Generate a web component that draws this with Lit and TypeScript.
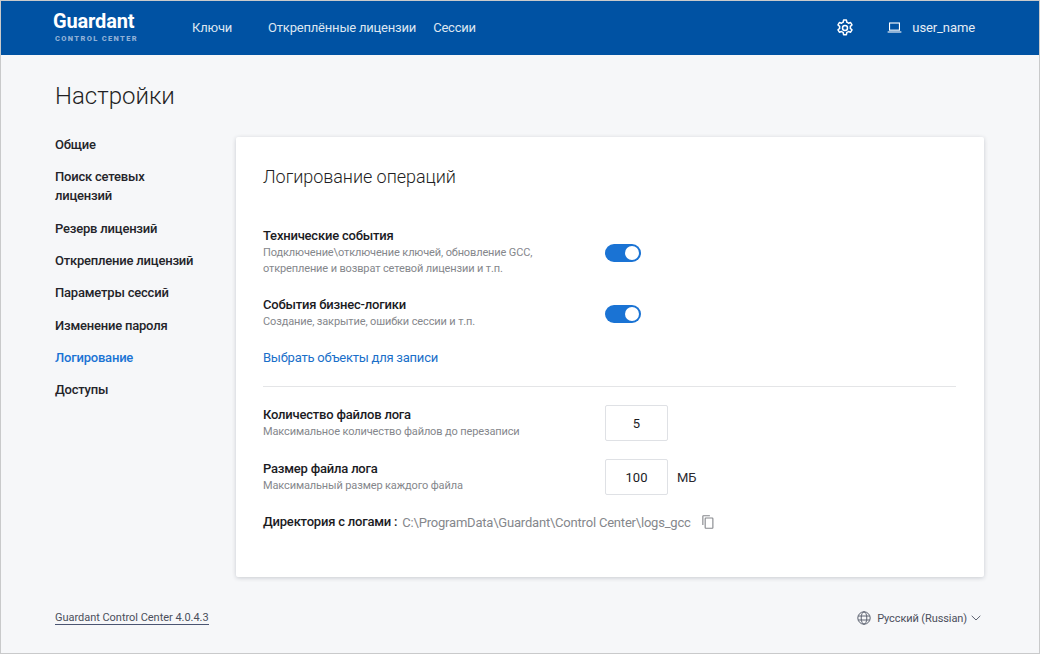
import { LitElement, css, html } from 'lit';
import { customElement } from 'lit/decorators.js';

const sections = [
  'Общие',
  'Поиск сетевых лицензий',
  'Резерв лицензий',
  'Открепление лицензий',
  'Параметры сессий',
  'Изменение пароля',
  'Логирование',
  'Доступы',
];

@customElement('app-root')
export class AppRoot extends LitElement {
  render() {
    return html`
      <div class="frame">
        <header class="topbar">
          <div class="logo">
            <span class="logo__name">Guardant</span>
            <span class="logo__sub">CONTROL CENTER</span>
          </div>
          <nav class="nav">
            <a class="nav__keys">Ключи</a>
            <a class="nav__detached">Открепл&#1105;нные лицензии</a>
            <a>Сессии</a>
          </nav>
          <svg class="gear" viewBox="0 0 24 24" fill="none" stroke="currentColor" stroke-width="1.8" stroke-linejoin="round">
            <circle cx="12" cy="12" r="3"></circle>
            <path d="M10.3 2.5h3.4l.5 2.6a7.2 7.2 0 0 1 2 1.15l2.5-.85 1.7 2.95-2 1.75a7.2 7.2 0 0 1 0 2.3l2 1.75-1.7 2.95-2.5-.85a7.2 7.2 0 0 1-2 1.15l-.5 2.6h-3.4l-.5-2.6a7.2 7.2 0 0 1-2-1.15l-2.5.85-1.7-2.95 2-1.75a7.2 7.2 0 0 1 0-2.3l-2-1.75 1.7-2.95 2.5.85a7.2 7.2 0 0 1 2-1.15z"></path>
          </svg>
          <div class="user">
            <svg class="laptop" viewBox="0 0 16 12" fill="none" stroke="currentColor" stroke-width="1.2">
              <rect x="2.6" y="1.1" width="10.8" height="7.8"></rect>
              <path d="M0.5 10.9h15"></path>
            </svg>
            <span>user_name</span>
          </div>
        </header>

        <div class="page">
          <h1 class="page__title">Настройки</h1>
          <div class="columns">
            <aside class="side">
              ${sections.map(
                (s) => html`<a class="side__item ${s === 'Логирование' ? 'side__item--active' : ''}">${s}</a>`
              )}
            </aside>

            <main class="card">
              <h2 class="card__title">Логирование операций</h2>

              <div class="row row--first">
                <div class="row__text">
                  <div class="label">Технические события</div>
                  <div class="hint">Подключение\\отключение ключей, обновление GCC,<br />открепление и возврат сетевой лицензии и т.п.</div>
                </div>
                <span class="switch"><span class="switch__knob"></span></span>
              </div>

              <div class="row row--second">
                <div class="row__text">
                  <div class="label">События бизнес-логики</div>
                  <div class="hint">Создание, закрытие, ошибки сессии и т.п.</div>
                </div>
                <span class="switch"><span class="switch__knob"></span></span>
              </div>

              <a class="link">Выбрать объекты для записи</a>
              <hr class="divider" />

              <div class="row">
                <div class="row__text">
                  <div class="label">Количество файлов лога</div>
                  <div class="hint">Максимальное количество файлов до перезаписи</div>
                </div>
                <div class="field">5</div>
              </div>

              <div class="row row--size">
                <div class="row__text">
                  <div class="label">Размер файла лога</div>
                  <div class="hint">Максимальный размер каждого файла</div>
                </div>
                <div class="field">100</div>
                <span class="unit">МБ</span>
              </div>

              <div class="dir">
                <span class="label">Директория с логами :</span>
                <span class="dir__path">C:\\ProgramData\\Guardant\\Control Center\\logs_gcc</span>
                <svg class="copy" viewBox="0 0 14 16" fill="none" stroke="currentColor" stroke-width="1.3">
                  <path d="M1 11.5V1.2a.5.5 0 0 1 .5-.5h7.7"></path>
                  <rect x="3.7" y="3.4" width="9" height="11.9" rx="0.7"></rect>
                </svg>
              </div>
            </main>
          </div>

          <footer class="footer">
            <a class="version">Guardant Control Center 4.0.4.3</a>
            <div class="lang">
              <svg class="globe" viewBox="0 0 14 14" fill="none" stroke="currentColor" stroke-width="1">
                <circle cx="7" cy="7" r="6.2"></circle>
                <ellipse cx="7" cy="7" rx="2.8" ry="6.2"></ellipse>
                <path d="M1.2 5h11.6M1.2 9h11.6"></path>
              </svg>
              <span>Русский (Russian)</span>
              <svg class="chevron" viewBox="0 0 10 6" fill="none" stroke="currentColor" stroke-width="1">
                <path d="M.7.8 5 5 9.3.8"></path>
              </svg>
            </div>
          </footer>
        </div>
      </div>
    `;
  }

  static styles = css`
    :host {
      display: block;
      font-family: Roboto, 'Liberation Sans', sans-serif;
      color: #1b1b1f;
    }

    .frame {
      box-sizing: border-box;
      width: 1040px;
      height: 654px;
      border: 1px solid #c9cacb;
      background: #f6f7f9;
      display: flex;
      flex-direction: column;
    }

    .topbar {
      flex: none;
      height: 54px;
      background: #0052a3;
      color: #fff;
      display: flex;
      align-items: center;
      padding-left: 53px;
      padding-right: 64px;
    }

    .logo {
      display: flex;
      flex-direction: column;
      width: 138px;
    }

    .logo__name {
      font-size: 20px;
      font-weight: 700;
      line-height: 21px;
      letter-spacing: -0.15px;
      margin-top: -1px;
      margin-left: -1px;
    }

    .logo__sub {
      font-size: 7.5px;
      font-weight: 900;
      line-height: 10px;
      letter-spacing: 1.35px;
      color: #8fb0d6;
      margin-left: 1px;
      margin-top: 2px;
    }

    .nav {
      display: flex;
      font-size: 13px;
      letter-spacing: -0.2px;
      color: #dde6f1;
      margin-bottom: 2px;
    }

    .nav__keys {
      margin-right: 36px;
    }

    .nav__detached {
      margin-right: 17px;
    }

    .gear {
      width: 20px;
      height: 20px;
      margin-left: auto;
      color: #fff;
    }

    .user {
      display: flex;
      align-items: center;
      margin-left: 32px;
      margin-bottom: 1px;
      font-size: 13px;
      letter-spacing: -0.1px;
      color: #e6edf5;
    }

    .laptop {
      width: 15px;
      height: 11px;
      margin-right: 10px;
      color: #fff;
    }

    .page {
      flex: 1;
      display: flex;
      flex-direction: column;
      padding: 0 55px 0 54px;
      min-height: 0;
    }

    .page__title {
      margin: 25px 0 0;
      font-size: 24px;
      font-weight: 300;
      line-height: 32px;
      color: #1f1f24;
    }

    .columns {
      display: flex;
      margin-top: 25px;
    }

    .side {
      width: 181px;
      flex: none;
      display: flex;
      flex-direction: column;
      gap: 12.8px;
      font-size: 13px;
      font-weight: 500;
      letter-spacing: -0.2px;
      line-height: 19.5px;
      margin-top: -2.4px;
    }

    .side__item {
      width: 145px;
      color: #24242a;
    }

    .side__item--active {
      color: #1a73d4;
    }

    .card {
      box-sizing: border-box;
      width: 749px;
      height: 440px;
      background: #fff;
      border-radius: 2px;
      box-shadow: 0 1px 4px rgba(40, 50, 70, 0.22);
      padding: 27px 28px 0 27px;
      display: flex;
      flex-direction: column;
    }

    .card__title {
      margin: 0;
      font-size: 18px;
      font-weight: 300;
      line-height: 26px;
      letter-spacing: -0.05px;
      color: #1f1f24;
    }

    .row {
      display: flex;
      align-items: center;
      margin-top: 18px;
      height: 36px;
    }

    .row--first {
      margin-top: 37px;
      height: 50px;
    }

    .row--second {
      margin-top: 18px;
      height: 36px;
    }

    .row--size {
      margin-top: 18px;
    }

    .row__text {
      width: 342px;
      flex: none;
    }

    .label {
      font-size: 13px;
      font-weight: 500;
      letter-spacing: -0.2px;
      line-height: 18px;
      color: #1b1b1f;
    }

    .hint {
      font-size: 11px;
      letter-spacing: -0.13px;
      line-height: 16px;
      color: #85878c;
    }

    .switch {
      width: 36px;
      height: 18px;
      margin-top: 2px;
      border-radius: 9px;
      background: #1a73d4;
      display: flex;
      align-items: center;
      justify-content: flex-end;
      padding-right: 2px;
      box-sizing: border-box;
    }

    .switch__knob {
      width: 14px;
      height: 14px;
      border-radius: 50%;
      background: #fff;
    }

    .link {
      margin-top: 17px;
      font-size: 13px;
      letter-spacing: -0.23px;
      line-height: 20px;
      color: #1a6fc9;
    }

    .divider {
      width: 100%;
      margin: 18px 0 0;
      border: 0;
      border-top: 1px solid #e4e5e7;
    }

    .divider + .row {
      margin-top: 18px;
    }

    .field {
      box-sizing: border-box;
      width: 63px;
      height: 36px;
      border: 1px solid #dfe1e5;
      border-radius: 2px;
      display: flex;
      align-items: center;
      justify-content: center;
      font-size: 13px;
      color: #1b1b1f;
    }

    .unit {
      margin-left: 9px;
      font-size: 13px;
      color: #2a2a30;
    }

    .dir {
      display: flex;
      align-items: center;
      margin-top: 18px;
    }

    .dir__path {
      margin-left: 5px;
      font-size: 13px;
      letter-spacing: -0.2px;
      color: #85878c;
    }

    .copy {
      width: 12px;
      height: 14px;
      margin-left: 11px;
      color: #85878c;
    }

    .footer {
      display: flex;
      justify-content: space-between;
      align-items: center;
      margin-top: 34px;
      font-size: 11px;
      color: #4b4f5c;
    }

    .version {
      border-bottom: 1px solid #4b5572;
      line-height: 13px;
      letter-spacing: -0.03px;
    }

    .lang {
      display: flex;
      align-items: center;
      padding-right: 3px;
      letter-spacing: -0.1px;
    }

    .globe {
      width: 14px;
      height: 14px;
      margin-right: 6px;
      color: #5c6270;
    }

    .chevron {
      width: 10px;
      height: 6px;
      margin-left: 4px;
      color: #5c6270;
    }
  `;
}

declare global {
  interface HTMLElementTagNameMap {
    'app-root': AppRoot;
  }
}
